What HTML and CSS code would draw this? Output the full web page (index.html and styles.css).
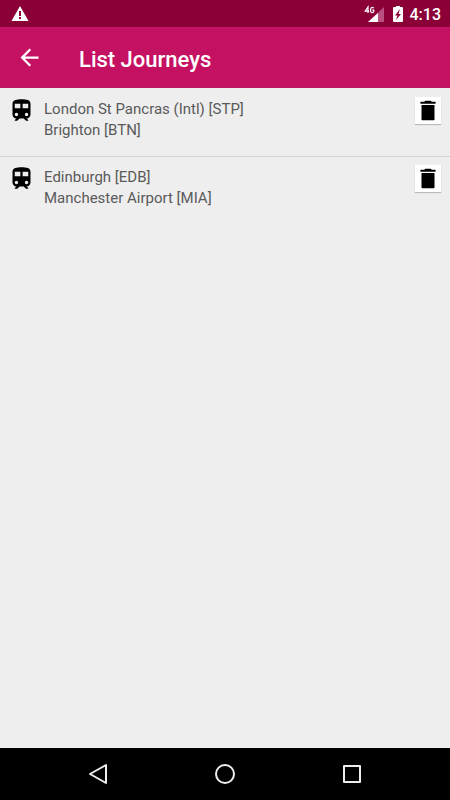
FILE: index.html
```html
<!DOCTYPE html>
<html lang="en">
<head>
<meta charset="utf-8">
<meta name="viewport" content="width=device-width, initial-scale=1">
<title>List Journeys</title>
<link rel="stylesheet" href="styles.css">
</head>
<body>
<div class="status">
  <svg class="status-warning" width="18" height="16" viewBox="0 0 18 16" aria-hidden="true"><path fill="#fff" fill-rule="evenodd" d="M9 0 17.500 15H.5zM8 5v5h2V5zM8 11v2h2v-2z"/></svg>
  <div class="status-end">
    <svg width="22" height="18" viewBox="0 0 22 18" aria-hidden="true"><path fill="#b9507f" d="M20 2v15H4z"/><path fill="#fff" d="M14 8v9H4z"/><path fill="none" stroke="#8c0038" stroke-width="3" d="M1 1h9v7H1z"/><path fill="none" stroke="#fff" stroke-width="1.200" d="M4 8V2L1.200 6.200H5.200M9.600 3.200C9 2 6.600 2 6.600 4.500V6c0 2 2.600 2 3.200.8V5.200H8.300"/></svg>
    <svg width="12" height="18" viewBox="0 0 12 18" aria-hidden="true"><path fill="#fff" fill-rule="evenodd" d="M4 1h4v1h2q1 0 1 1v13q0 1-1 1H2q-1 0-1-1V3q0-1 1-1h2zM8 4 3 10.500h2.500L4 15l5-6H6.500z"/></svg>
    <span class="clock">4:13</span>
  </div>
</div>
<header class="toolbar">
  <button class="back" aria-label="Back"><svg width="27" height="27" viewBox="0 0 24 24"><path fill="#fff" d="M20 11H7.830l5.590-5.590L12 4l-8 8 8 8 1.410-1.410L7.830 13H20v-2z"/></svg></button>
  <h1>List Journeys</h1>
</header>
<main>
  <ul class="journeys">
    <li class="journey">
      <svg class="train" viewBox="0 0 24 24" aria-hidden="true"><path d="M12 2c-4 0-8 .5-8 4v9.500C4 17.430 5.570 19 7.500 19L6 20.500v.5h2.230l2-2H14l2 2h2v-.5L16.500 19c1.930 0 3.500-1.570 3.500-3.500V6c0-3.500-3.580-4-8-4zM7.500 17c-.83 0-1.500-.67-1.500-1.500S6.670 14 7.500 14s1.500.67 1.500 1.500S8.330 17 7.500 17zm3.500-7H6V6h5v4zm2 0V6h5v4h-5zm3.500 7c-.83 0-1.500-.67-1.500-1.500s.67-1.500 1.500-1.500 1.500.67 1.500 1.500-.67 1.500-1.500 1.500z"/></svg>
      <div class="stations"><div>London St Pancras (Intl) [STP]</div><div>Brighton [BTN]</div></div>
      <button class="delete" aria-label="Delete journey"><svg width="27" height="27" viewBox="0 0 24 24"><path d="M6 20.300q0 .7.700.7h10.600q.7 0 .7-.7V7H6zM19 4h-3.500l-1-1h-5l-1 1H5v1.700h14z"/></svg></button>
    </li>
    <li class="journey">
      <svg class="train" viewBox="0 0 24 24" aria-hidden="true"><path d="M12 2c-4 0-8 .5-8 4v9.500C4 17.430 5.570 19 7.500 19L6 20.500v.5h2.230l2-2H14l2 2h2v-.5L16.500 19c1.930 0 3.500-1.570 3.500-3.500V6c0-3.500-3.580-4-8-4zM7.500 17c-.83 0-1.500-.67-1.500-1.500S6.670 14 7.500 14s1.500.67 1.500 1.500S8.330 17 7.500 17zm3.500-7H6V6h5v4zm2 0V6h5v4h-5zm3.500 7c-.83 0-1.500-.67-1.500-1.500s.67-1.500 1.500-1.500 1.500.67 1.500 1.500-.67 1.500-1.500 1.500z"/></svg>
      <div class="stations"><div>Edinburgh [EDB]</div><div>Manchester Airport [MIA]</div></div>
      <button class="delete" aria-label="Delete journey"><svg width="27" height="27" viewBox="0 0 24 24"><path d="M6 20.300q0 .7.700.7h10.600q.7 0 .7-.7V7H6zM19 4h-3.500l-1-1h-5l-1 1H5v1.700h14z"/></svg></button>
    </li>
  </ul>
</main>
<nav class="navbar" aria-label="System">
  <button aria-label="Back"><svg width="22" height="22" viewBox="0 0 22 22"><path d="M19 2v18L3 11z"/></svg></button>
  <button aria-label="Home"><svg width="22" height="22" viewBox="0 0 22 22"><circle cx="11" cy="11" r="9"/></svg></button>
  <button aria-label="Recent apps"><svg width="22" height="22" viewBox="0 0 22 22"><path d="M3 3h16v16H3z"/></svg></button>
</nav>
</body>
</html>
```
FILE: styles.css
```css
* {
  box-sizing: border-box;
}

body {
  margin: 0;
  min-height: 100vh;
  display: flex;
  flex-direction: column;
  background: #eeeeee;
  font-family: Roboto, "Liberation Sans", sans-serif;
}

svg {
  display: block;
}

button {
  padding: 0;
  border: 0;
  background: none;
}

.status {
  height: 27px;
  padding: 0 9px 0 11px;
  display: flex;
  align-items: center;
  justify-content: space-between;
  background: #8c0038;
}

.status-end {
  display: flex;
  align-items: center;
  gap: 6px;
}

.clock {
  padding-top: 2px;
  color: #fff;
  font-size: 16px;
  font-weight: 500;
  line-height: 24px;
}

.toolbar {
  height: 61px;
  padding: 0 16px;
  display: flex;
  align-items: center;
  gap: 36px;
  background: #c51162;
  border-bottom: 1px solid #b51a60;
}

.toolbar h1 {
  margin: 0;
  padding-top: 5px;
  color: #fff;
  font-size: 22px;
  font-weight: 500;
  line-height: 26px;
}

main {
  flex: 1;
}

.journeys {
  margin: 0;
  padding: 1px 0 0;
  list-style: none;
}

.journey {
  min-height: 68px;
  padding: 8px 9px 8px 8px;
  display: flex;
  align-items: flex-start;
  gap: 9px;
}

.journey:not(:last-child) {
  border-bottom: 1px solid #d2d2d2;
}

.train {
  width: 27px;
  height: 27px;
  flex: none;
}

.stations {
  flex: 1;
  padding-top: 2px;
  color: #5a5a5a;
  font-size: 15px;
  line-height: 21px;
}

.delete {
  width: 26px;
  height: 27px;
  display: flex;
  justify-content: center;
  background: #fff;
  box-shadow: 0 1px 1px #bbb;
}

.navbar {
  height: 52px;
  padding: 0 35px;
  display: grid;
  grid-template-columns: repeat(3, 1fr);
  background: #000;
}

.navbar button {
  display: flex;
  align-items: center;
  justify-content: center;
}

.navbar svg {
  fill: none;
  stroke: #eee;
  stroke-width: 2;
  stroke-linejoin: round;
}
```
